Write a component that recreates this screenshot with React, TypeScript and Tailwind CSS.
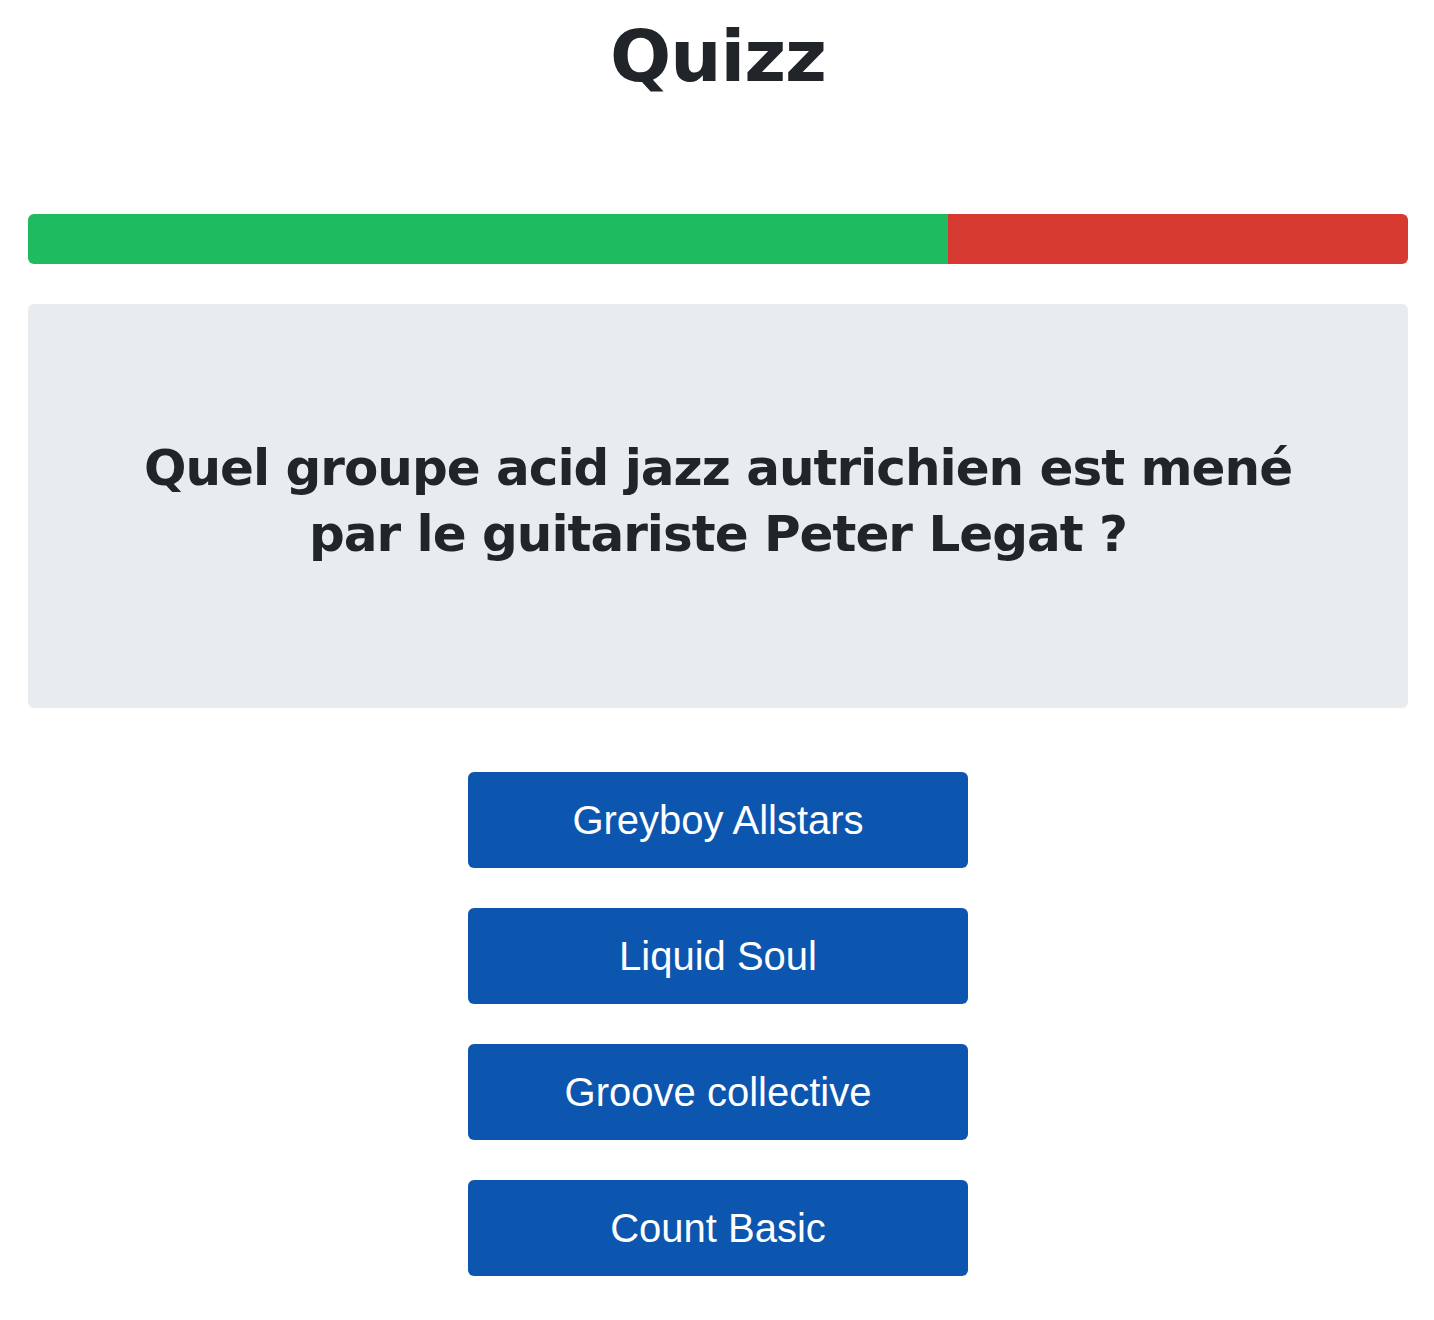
import React from "react";

const answers = ["Greyboy Allstars", "Liquid Soul", "Groove collective", "Count Basic"];

export default function App() {
  const correct = 920;
  const total = 1380;
  return (
    <div className="min-h-screen bg-white pl-[28px] pr-[26px] text-[#212529]">
      <h1 className="pt-[6px] text-center font-['DejaVu_Sans',sans-serif] text-[72px] font-bold leading-[100px] tracking-[-1px]">
        Quizz
      </h1>

      <div className="mt-[108px] flex h-[50px] w-full overflow-hidden rounded-[6px]">
        <div className="h-full bg-[#1fbb60]" style={{ width: `${(correct / total) * 100}%` }} />
        <div className="h-full flex-1 bg-[#d63a30]" />
      </div>

      <div className="mt-[40px] flex h-[404px] items-center justify-center rounded-[6px] bg-[#e9ecef] px-[64px] pb-[10px]">
        <h2 className="text-center font-['DejaVu_Sans',sans-serif] text-[50px] font-bold leading-[66px] tracking-[-1px]">
          Quel groupe acid jazz autrichien est mené
          <br />
          par le guitariste Peter Legat ?
        </h2>
      </div>

      <div className="mt-[64px] flex flex-col items-center gap-[40px] pb-[44px]">
        {answers.map((a) => (
          <button
            key={a}
            className="flex h-[96px] w-[500px] items-center justify-center rounded-[6px] bg-[#0c56b0] font-['Liberation_Sans',Arial,sans-serif] text-[40px] text-white"
          >
            {a}
          </button>
        ))}
      </div>
    </div>
  );
}
